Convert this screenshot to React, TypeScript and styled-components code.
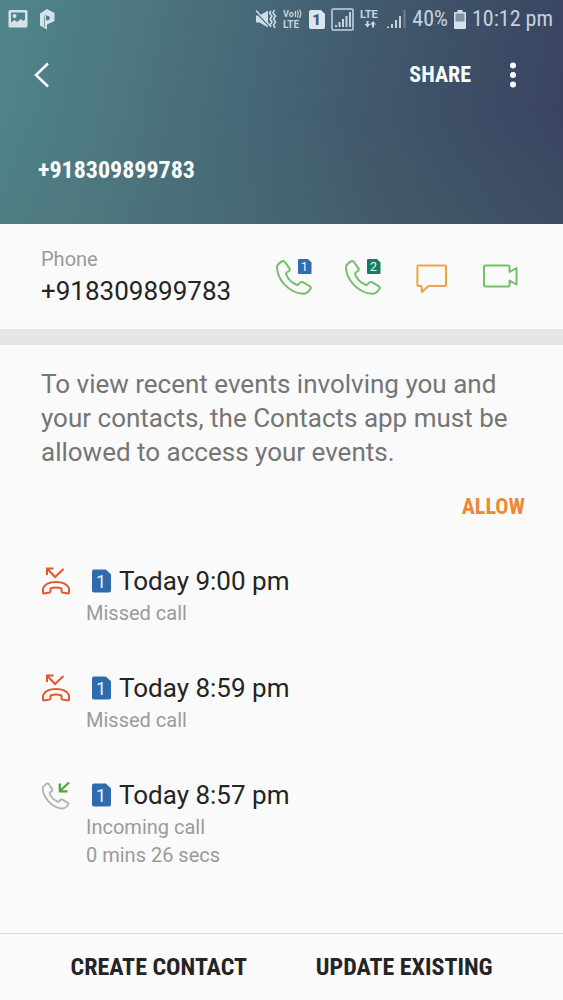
import React from 'react';
import styled, { createGlobalStyle } from 'styled-components';

const GlobalStyle = createGlobalStyle`
  * { box-sizing: border-box; }
  html, body, #root { min-height: 100vh; }
  body {
    margin: 0;
    background: #fafafa;
    color: #242424;
    font-family: Roboto, 'Liberation Sans', sans-serif;
  }
  h1, h2, p, ul { margin: 0; padding: 0; font-weight: 400; }
  button { border: 0; padding: 0; background: none; color: inherit; cursor: pointer; }
  svg { display: block; flex: none; }
`;

const condensed = `'Roboto Condensed', Roboto, 'Liberation Sans', sans-serif`;

const Page = styled.div`
  display: flex;
  flex-direction: column;
  min-height: 100vh;
`;

const Header = styled.header`
  display: flex;
  flex-direction: column;
  height: 224px;
  color: #fafdff;
  background:
    linear-gradient(0deg, rgba(80, 120, 110, 0.2), rgba(80, 120, 110, 0) 50%),
    linear-gradient(102deg, #50858b 0%, #4c7680 24%, #466677 46%, #3f5469 70%, #384160 100%);
`;

const StatusBar = styled.div`
  display: flex;
  align-items: center;
  justify-content: space-between;
  height: 38px;
  padding: 0 10px 0 8px;
  color: #c6d3df;
  font: 400 22px/38px ${condensed};
`;

const StatusGroup = styled.div<{ $gap: number }>`
  display: flex;
  align-items: center;
  gap: ${(p) => p.$gap}px;
`;

const AppBar = styled.div`
  display: flex;
  align-items: center;
  height: 74px;
  padding: 0 32px 0 24px;
`;

const IconButton = styled.button`
  display: flex;
  align-items: center;
  justify-content: center;
  width: 36px;
  height: 36px;
`;

const ShareButton = styled.button`
  margin: 0 24px 0 auto;
  font: 700 22px/36px ${condensed};
`;

const Title = styled.h1`
  padding: 42px 38px 0;
  font: 700 24px/32px ${condensed};
`;

const PhoneCard = styled.section`
  display: flex;
  align-items: center;
  justify-content: space-between;
  height: 105px;
  padding: 0 44px 0 41px;
`;

const PhoneLabel = styled.p`
  color: #9a9a9a;
  font-size: 20px;
  line-height: 28px;
`;

const PhoneNumber = styled.p`
  font-size: 26px;
  line-height: 36px;
`;

const Actions = styled.div`
  display: flex;
  gap: 33px;
`;

const Divider = styled.hr`
  width: 100%;
  height: 16px;
  margin: 0;
  border: 0;
  background: #e6e6e6;
`;

const Notice = styled.section`
  display: flex;
  flex-direction: column;
  padding: 22px 38px 0 41px;
`;

const NoticeText = styled.p`
  color: #757575;
  font-size: 26px;
  line-height: 34px;
`;

const AllowButton = styled.button`
  align-self: flex-end;
  margin-top: 20px;
  color: #ea8a34;
  font: 700 22px/36px ${condensed};
`;

const Log = styled.ul`
  flex: 1;
  padding: 38px 38px 0 41px;
  list-style: none;
`;

const Entry = styled.li`
  display: flex;
  gap: 15px;
  min-height: 107px;
`;

const EntryIcon = styled.div`
  padding-top: 3px;
`;

const EntryTime = styled.h2`
  display: flex;
  align-items: center;
  gap: 8px;
  padding-left: 6px;
  font-size: 26px;
  line-height: 36px;
`;

const EntryDetail = styled.p`
  color: #9a9a9a;
  font-size: 20px;
  line-height: 28px;
`;

const Footer = styled.footer`
  display: flex;
  height: 67px;
  padding: 0 36px;
  border-top: 1px solid #dedede;
`;

const FooterButton = styled.button`
  flex: 1;
  font: 700 24px/64px ${condensed};
`;

const HANDSET =
  'M1.2 7 Q1.6 5.6 5.4 2.6 Q7.6 1 9 3 L13.4 9.4 Q14.4 11 12.6 12.4 Q9.8 13.6 10 14.8 Q12.4 22.4 21 26 Q22.2 26.2 23.4 24.2 Q25 22.4 27 23.2 L34 27.4 Q35.4 28.6 34.4 30 Q31.4 34.4 28 34.8 Q17.6 35 8.4 25.4 Q0.2 15.8 1.2 7 Z';

const SimBadge = ({ label, color, width, height }: { label: string; color: string; width: number; height: number }) => (
  <svg width={width} height={height} viewBox="0 0 20 24" role="img" aria-label={`SIM ${label}`}>
    <path d="M2 0 H14.5 L20 5 V22 Q20 24 18 24 H2 Q0 24 0 22 V2 Q0 0 2 0 Z" fill={color} />
    <text x="9.5" y="19" textAnchor="middle" fontFamily="Roboto, sans-serif" fontSize="19" fill="#e6f2ff">
      {label}
    </text>
  </svg>
);

const CallIcon = ({ sim, color }: { sim: string; color: string }) => (
  <svg width="36" height="36" viewBox="0 0 36 36" fill="none">
    <path d={HANDSET} stroke="#74bf68" strokeWidth="2" strokeLinejoin="round" />
    <path d="M23 0 H32 L35.500 3.500 V14 Q35.500 15 34.500 15 H23 Q22 15 22 14 V1 Q22 0 23 0 Z" fill={color} />
    <text x="28.500" y="12" textAnchor="middle" fontFamily="Roboto, sans-serif" fontSize="13" fill="#e6f5ff">
      {sim}
    </text>
  </svg>
);

const MessageIcon = () => (
  <svg width="36" height="36" viewBox="0 0 36 36" fill="none" stroke="#eba540" strokeWidth="2" strokeLinejoin="round">
    <path d="M4 6.500 H31 Q32 6.500 32 7.500 V26 Q32 27 31 27 H14.500 L8 33 L7.500 27 H4 Q3.400 27 3.400 26 V7.500 Q3.400 6.500 4 6.500 Z" />
  </svg>
);

const VideoIcon = () => (
  <svg width="36" height="36" viewBox="0 0 36 36" fill="none" stroke="#74bf68" strokeWidth="2" strokeLinejoin="round">
    <path d="M2 6.500 H25.500 Q26.500 6.500 26.500 7.500 V13 L33.500 9 V25.500 L26.500 21.500 V26.500 Q26.500 27.500 25.500 27.500 H2 Q1 27.500 1 26.500 V7.500 Q1 6.500 2 6.500 Z" />
  </svg>
);

const MissedIcon = () => (
  <svg width="30" height="30" viewBox="0 0 30 30" fill="none" stroke="#e0592f" strokeWidth="2">
    <path d="M6 9 V2.500 H12.500 M6.500 3 L14 11 L22.500 3" />
    <path
      strokeLinejoin="round"
      d="M2 26.500 V22.500 Q4.500 16 15 16 Q25.500 16 28 22.500 V26.500 Q28 27.500 27 27.400 L21.500 26.600 Q20.500 26.400 20.500 25 V22.500 Q15 20.600 9.500 22.500 V25 Q9.500 26.400 8.500 26.600 L3 27.400 Q2 27.500 2 26.500 Z"
    />
  </svg>
);

const IncomingIcon = () => (
  <svg width="30" height="30" viewBox="0 0 30 30" fill="none">
    <g transform="translate(1 2) scale(0.76)">
      <path d={HANDSET} stroke="#b4b4b4" strokeWidth="2.500" strokeLinejoin="round" />
    </g>
    <path d="M28 2.500 L19 11 M18.800 3.500 V11.300 H26.500" stroke="#4da83a" strokeWidth="2.300" />
  </svg>
);

const PictureIcon = () => (
  <svg width="20" height="20" viewBox="0 0 20 20">
    <path
      fillRule="evenodd"
      d="M2 1 H18 Q19.500 1 19.500 2.500 V17 Q19.500 18.500 18 18.500 H2 Q0.500 18.500 0.500 17 V2.500 Q0.500 1 2 1 Z M3 3.500 V13.500 L6.500 11 L9 13 L13 10 L15 12 L17 10.500 V3.500 Z"
      fill="#d5e3e8"
    />
    <circle cx="6.500" cy="7" r="2" fill="#d5e3e8" />
  </svg>
);

const PIcon = () => (
  <svg width="16" height="22" viewBox="0 0 16 22">
    <path
      fillRule="evenodd"
      d="M1 5.500 L8 1 L15.500 5 V13 L8 16.500 V21.500 L4.500 19.500 L1 17.500 Z M7 7.500 V12.500 Q10.800 12.500 10.800 10 Q10.800 7.500 7 7.500 Z"
      fill="#d5e3e8"
    />
    <path d="M7 7 L5.500 8.500 V19" fill="none" stroke="#7d9ca4" />
  </svg>
);

const MuteIcon = () => (
  <svg width="22" height="20" viewBox="0 0 22 20" fill="none" stroke="#d0dde6">
    <path d="M1 6.500 H4.500 L13 1.500 V18.500 L4.500 13.500 H1 Z" fill="#d0dde6" stroke="none" />
    <path d="M0 2.500 L14.500 17.500" stroke="#48677a" strokeWidth="1.500" />
    <path d="M1 1.500 L15 16.500" strokeWidth="1.500" />
    <path d="M16 2 L14.500 4 L17 7 L15 10 L17 13 L15 16 L16 18 M19.500 1 L18 4 L20.500 7 L18.500 10 L20.500 13 L18.500 16 L20 19" strokeWidth="1.600" />
  </svg>
);

const VolteIcon = () => (
  <svg width="20" height="20" viewBox="0 0 20 20" fill="#c6d3df" fontFamily="Roboto, sans-serif" fontWeight="700">
    <text x="0" y="8" fontSize="9">Vo</text>
    <text x="0" y="19" fontSize="10">LTE</text>
    <path d="M12.500 2 V8 M14.500 1.500 Q16 5 14.500 8.500 M16.500 0.500 Q19 5 16.500 9" fill="none" stroke="#c6d3df" strokeWidth="1.200" />
  </svg>
);

const StatusSimIcon = () => (
  <svg width="16" height="19" viewBox="0 0 16 19">
    <path d="M2 0 H12 L16 4 V17 Q16 19 14 19 H2 Q0 19 0 17 V2 Q0 0 2 0 Z" fill="#dbe6ee" />
    <text x="7.500" y="14.500" textAnchor="middle" fontFamily="Roboto, sans-serif" fontWeight="900" fontSize="15" fill="#3f5c70">
      1
    </text>
  </svg>
);

const BoxedSignalIcon = () => (
  <svg width="23" height="23" viewBox="0 0 23 23" stroke="#c6d3df" fill="none">
    <rect x="1" y="1" width="21" height="21" rx="1" strokeWidth="1.500" />
    <path d="M5 19 V17 M8.500 19 V14 M12 19 V11 M15.500 19 V8 M19 19 V4" strokeWidth="2" />
  </svg>
);

const LteIcon = () => (
  <svg width="20" height="20" viewBox="0 0 20 20" fill="#c6d3df">
    <text x="0" y="9" fontFamily="Roboto, sans-serif" fontWeight="700" fontSize="11">LTE</text>
    <path d="M6.500 12 H8.500 V15 H10.500 L7.500 18.500 L4.500 15 H6.500 Z M12 18.500 H14 V15.500 H16 L13 12 L10 15.500 H12 Z" />
  </svg>
);

const SignalIcon = () => (
  <svg width="20" height="20" viewBox="0 0 20 20" stroke="#c6d3df" strokeWidth="2">
    <path d="M2 19 V17.500 M6 19 V15 M10 19 V11 M14 19 V7" />
    <path d="M18.500 19 V1" opacity="0.350" />
  </svg>
);

const BatteryIcon = () => (
  <svg width="12" height="19" viewBox="0 0 12 19">
    <path d="M3.500 0 H8.500 V2 H11 Q12 2 12 3 V18 Q12 19 11 19 H1 Q0 19 0 18 V3 Q0 2 1 2 H3.500 Z" fill="#d5e0e8" />
    <rect x="1.500" y="3.500" width="9" height="8" fill="#8494a2" />
  </svg>
);

const entries = [
  { time: 'Today 9:00 pm', details: ['Missed call'], Icon: MissedIcon },
  { time: 'Today 8:59 pm', details: ['Missed call'], Icon: MissedIcon },
  { time: 'Today 8:57 pm', details: ['Incoming call', '0 mins 26 secs'], Icon: IncomingIcon },
];

export default function App() {
  return (
    <>
      <GlobalStyle />
      <Page>
        <Header>
          <StatusBar>
            <StatusGroup $gap={11}>
              <PictureIcon />
              <PIcon />
            </StatusGroup>
            <StatusGroup $gap={6}>
              <MuteIcon />
              <VolteIcon />
              <StatusSimIcon />
              <BoxedSignalIcon />
              <LteIcon />
              <SignalIcon />
              <span>40%</span>
              <BatteryIcon />
              <span>10:12 pm</span>
            </StatusGroup>
          </StatusBar>
          <AppBar>
            <IconButton aria-label="Back">
              <svg width="16" height="26" viewBox="0 0 16 26" fill="none" stroke="currentColor" strokeWidth="2.500">
                <path d="M14 1.500 L2 13 L14 24.500" />
              </svg>
            </IconButton>
            <ShareButton>SHARE</ShareButton>
            <IconButton aria-label="More options">
              <svg width="6" height="26" viewBox="0 0 6 26" fill="currentColor">
                <circle cx="3" cy="3.500" r="3" />
                <circle cx="3" cy="13" r="3" />
                <circle cx="3" cy="22.500" r="3" />
              </svg>
            </IconButton>
          </AppBar>
          <Title>+918309899783</Title>
        </Header>
        <PhoneCard>
          <div>
            <PhoneLabel>Phone</PhoneLabel>
            <PhoneNumber>+918309899783</PhoneNumber>
          </div>
          <Actions>
            <IconButton aria-label="Call with SIM 1"><CallIcon sim="1" color="#336cae" /></IconButton>
            <IconButton aria-label="Call with SIM 2"><CallIcon sim="2" color="#12805c" /></IconButton>
            <IconButton aria-label="Send message"><MessageIcon /></IconButton>
            <IconButton aria-label="Video call"><VideoIcon /></IconButton>
          </Actions>
        </PhoneCard>
        <Divider />
        <Notice>
          <NoticeText>
            To view recent events involving you and your contacts, the Contacts app must be allowed to access your events.
          </NoticeText>
          <AllowButton>ALLOW</AllowButton>
        </Notice>
        <Log>
          {entries.map(({ time, details, Icon }) => (
            <Entry key={time}>
              <EntryIcon><Icon /></EntryIcon>
              <div>
                <EntryTime>
                  <SimBadge label="1" color="#2f6cad" width={19} height={24} />
                  {time}
                </EntryTime>
                {details.map((detail) => (
                  <EntryDetail key={detail}>{detail}</EntryDetail>
                ))}
              </div>
            </Entry>
          ))}
        </Log>
        <Footer>
          <FooterButton>CREATE CONTACT</FooterButton>
          <FooterButton>UPDATE EXISTING</FooterButton>
        </Footer>
      </Page>
    </>
  );
}
